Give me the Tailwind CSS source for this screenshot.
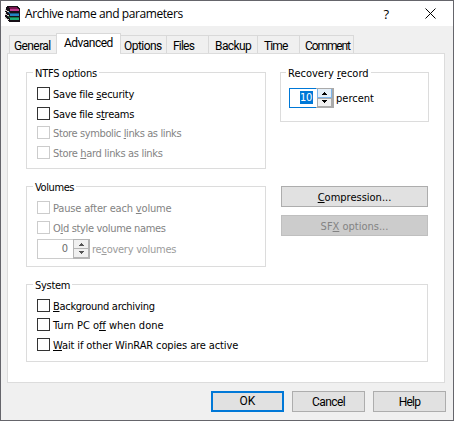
<!DOCTYPE html>
<html lang="en">
<head>
<meta charset="utf-8">
<title>Archive name and parameters</title>
<script src="https://cdn.jsdelivr.net/npm/@tailwindcss/browser@4"></script>
</head>
<body class="w-[454px] h-[421px] overflow-hidden font-['DejaVu_Sans_Condensed','DejaVu_Sans',sans-serif] text-[11px] leading-[13px] text-black whitespace-nowrap">
<div class="w-[454px] h-[421px] border border-[#65656b] bg-[#f0f0f0] flex flex-col">
  <header class="h-[25px] shrink-0 bg-white flex items-center pl-[3px] pr-[17px]">
    <svg class="w-4 h-4 shrink-0" viewBox="0 0 16 16" shape-rendering="crispEdges">
      <path fill="#171017" d="M3 0h10l3 3v13H6l-4-3-1-3 1-3-1-3z"/>
      <path fill="#7b1650" d="M4 1h8l2 2H6z"/><path fill="#c23a8e" d="M6 3h9v2H6z"/>
      <path fill="#1a547d" d="M3 6h2l1 1h9v1H5z"/><path fill="#2583c2" d="M6 8h9v2H6z"/>
      <path fill="#167744" d="M3 10l3 2h9v-1H6z"/><path fill="#22b07a" d="M6 12h9v2H6z"/>
      <path fill="#d8d5cf" d="M1 3h1v1h1v1h2v1H3V5H1zM1 7h1v1h1v1h2v1H3V9H1zM1 11h1v1h1v1h2v1H3v-1H1z"/>
    </svg>
    <h1 class="ml-[5px] font-['Open_Sans',sans-serif] text-[12px] leading-4 tracking-[-0.42px]">Archive name and parameters</h1>
    <span class="ml-auto font-['Open_Sans',sans-serif] text-[13px] leading-4">?</span>
    <svg class="w-[11px] h-[11px] ml-[36px]" viewBox="0 0 11 11"><path d="M.5 .5l10 10M10.5 .5l-10 10" stroke="#000" fill="none"/></svg>
  </header>

  <nav class="h-[27px] shrink-0 pl-2 flex items-end font-[Roboto,sans-serif] text-[12px] leading-[14px]">
    <div class="w-[47px] h-[18px] border-l border-t border-[#d9d9d9] pl-[4px] pt-[3px]"><span class="tracking-[-0.6px]">General</span></div>
    <div class="w-[65px] h-[20px] border border-b-0 border-[#d9d9d9] bg-white pl-[7px] pt-[2px] relative"><span class="tracking-[-0.5px]">Advanced</span><i class="absolute left-0 right-0 -bottom-px h-px bg-white"></i></div>
    <div class="w-[45px] h-[18px] border-t border-[#d9d9d9] pl-[3px] pt-[3px]"><span class="tracking-[-0.55px]">Options</span></div>
    <div class="w-[42px] h-[18px] border-l border-t border-[#d9d9d9] pl-[6px] pt-[3px]"><span class="tracking-[-0.8px]">Files</span></div>
    <div class="w-[49px] h-[18px] border-l border-t border-[#d9d9d9] pl-[6px] pt-[3px]"><span class="tracking-[-0.6px]">Backup</span></div>
    <div class="w-[42px] h-[18px] border-l border-t border-[#d9d9d9] pl-[6px] pt-[3px]"><span class="tracking-[-0.9px]">Time</span></div>
    <div class="w-[55px] h-[18px] border-x border-t border-[#d9d9d9] pl-[5px] pt-[3px]"><span class="tracking-[-1.1px]">Comment</span></div>
  </nav>

  <main class="ml-[6px] w-[438px] h-[330px] shrink-0 border border-[#dcdcdc] bg-white pl-[18px] pt-[12px]">
    <div class="flex h-[202px]">
      <div class="w-[240px]">
        <fieldset class="relative h-[103px] pt-[6px]">
          <div class="h-[97px] border border-[#dcdcdc] pl-[10px] pt-[14px]">
            <span class="absolute left-[7px] top-px bg-white px-[2px] tracking-[-0.25px]">NTFS options</span>
            <label class="flex h-[20px] gap-[3px]"><i class="w-[13px] h-[13px] border border-[#333]"></i><span class="pt-px tracking-[-0.23px]">Save file <u>s</u>ecurity</span></label>
            <label class="flex h-[19px] gap-[3px]"><i class="w-[13px] h-[13px] border border-[#333]"></i><span class="pt-px tracking-[-0.26px]">Save file s<u>t</u>reams</span></label>
            <label class="flex h-[20px] gap-[3px] text-[#838383]"><i class="w-[13px] h-[13px] border border-[#ccc]"></i><span class="pt-px tracking-[-0.38px]">Store symbolic <u>l</u>inks as links</span></label>
            <label class="flex h-[20px] gap-[3px] text-[#838383]"><i class="w-[13px] h-[13px] border border-[#ccc]"></i><span class="pt-px tracking-[-0.33px]">Store <u>h</u>ard links as links</span></label>
          </div>
        </fieldset>
        <fieldset class="relative h-[87px] mt-[11px] pt-[6px]">
          <div class="h-[81px] border border-[#dcdcdc] pl-[10px] pt-[14px]">
            <span class="absolute left-[7px] top-px bg-white px-[2px] tracking-[-0.4px]">Volumes</span>
            <label class="flex h-[20px] gap-[3px] text-[#838383]"><i class="w-[13px] h-[13px] border border-[#ccc]"></i><span class="pt-px tracking-[-0.17px]">Pause after each <u>v</u>olume</span></label>
            <label class="flex h-[18px] gap-[3px] text-[#838383]"><i class="w-[13px] h-[13px] border border-[#ccc]"></i><span class="pt-px tracking-[-0.33px]">O<u>l</u>d style volume names</span></label>
            <div class="flex items-center text-[#9c9c9c]">
              <div class="w-[53px] h-[20px] border border-[#ccc] flex"><span class="w-[30px] text-right leading-[18px] text-[#6d6d6d]">0</span>
                <svg class="w-[17px] h-[20px] -mt-px ml-auto -mr-px" viewBox="0 0 17 20" shape-rendering="crispEdges"><path fill="#b5b5b5" d="M0 0h17v20H0z"/><path fill="#f0f0f0" d="M1 1h14v8H1zM1 10h14v8H1z"/><path fill="#555" d="M8 4h1v1h1v1h1v1H6V6h1V5h1zM6 12h5v1h-1v1H9v1H8v-1H7v-1H6z"/></svg>
              </div>
              <span class="ml-[2px] tracking-[-0.25px]">re<u>c</u>overy volumes</span>
            </div>
          </div>
        </fieldset>
      </div>
      <div class="ml-[14px] w-[149px]">
        <fieldset class="relative h-[56px] pt-[6px]">
          <div class="h-[50px] border border-[#dcdcdc] pl-[8px] pt-[15px] flex items-start">
            <span class="absolute left-[6px] top-px bg-white px-[2px]">Recovery <u>r</u>ecord</span>
            <div class="w-[45px] h-[20px] border border-[#0078d7] flex"><span class="ml-[10px] mt-[2px] h-[13px] w-[13px] bg-[#0078d7] text-white tracking-[-0.3px]">10</span>
              <svg class="w-[18px] h-[20px] -mt-px ml-auto -mr-px" viewBox="0 0 18 20" shape-rendering="crispEdges"><path fill="#aaa" d="M0 0h18v20H0z"/><path fill="#fff" d="M0 1h1v18H0z"/><path fill="#e5eff8" d="M2 1h13v8H2z"/><path fill="#f0f0f0" d="M2 11h13v7H2z"/><path fill="#7eb4ea" d="M1 1h1v8h13V1h1v9H1z"/><path fill="#000" d="M8 4h1v1h1v1h1v1H6V6h1V5h1zM6 12h5v1h-1v1H9v1H8v-1H7v-1H6z"/></svg>
            </div>
            <span class="ml-[2px] mt-[4px]">percent</span>
          </div>
        </fieldset>
        <button class="block ml-px mt-[64px] w-[147px] h-[21px] border border-[#adadad] bg-[#e1e1e1] pt-px"><u>C</u>ompression...</button>
        <button class="block ml-px mt-[8px] w-[147px] h-[21px] border border-[#bfbfbf] bg-[#ccc] text-[#838383] pt-px">SF<u>X</u> options...</button>
      </div>
    </div>
    <fieldset class="relative w-[402px] h-[84px] mt-[10px] pt-[6px]">
      <div class="h-[78px] border border-[#dcdcdc] pl-[10px] pt-[14px]">
        <span class="absolute left-[7px] top-px bg-white px-[2px] tracking-[-0.3px]">System</span>
        <label class="flex h-[19px] gap-[3px]"><i class="w-[13px] h-[13px] border border-[#333]"></i><span class="pt-px tracking-[-0.3px]"><u>B</u>ackground archiving</span></label>
        <label class="flex h-[20px] gap-[3px]"><i class="w-[13px] h-[13px] border border-[#333]"></i><span class="pt-px">Turn PC o<u>f</u>f when done</span></label>
        <label class="flex h-[20px] gap-[3px]"><i class="w-[13px] h-[13px] border border-[#333]"></i><span class="pt-px tracking-[-0.12px]"><u>W</u>ait if other WinRAR copies are active</span></label>
      </div>
    </fieldset>
  </main>

  <footer class="flex mt-[8px] ml-[210px] gap-[8px] font-[Roboto,sans-serif] text-[12px] leading-[14px]">
    <button class="w-[73px] h-[21px] border-2 border-[#0078d7] bg-[#e1e1e1] leading-[17px]">OK</button>
    <button class="w-[73px] h-[21px] border border-[#adadad] bg-[#e1e1e1] tracking-[-0.6px]">Cancel</button>
    <button class="w-[73px] h-[21px] border border-[#adadad] bg-[#e1e1e1] tracking-[-0.8px]">Help</button>
  </footer>
</div>
</body>
</html>
